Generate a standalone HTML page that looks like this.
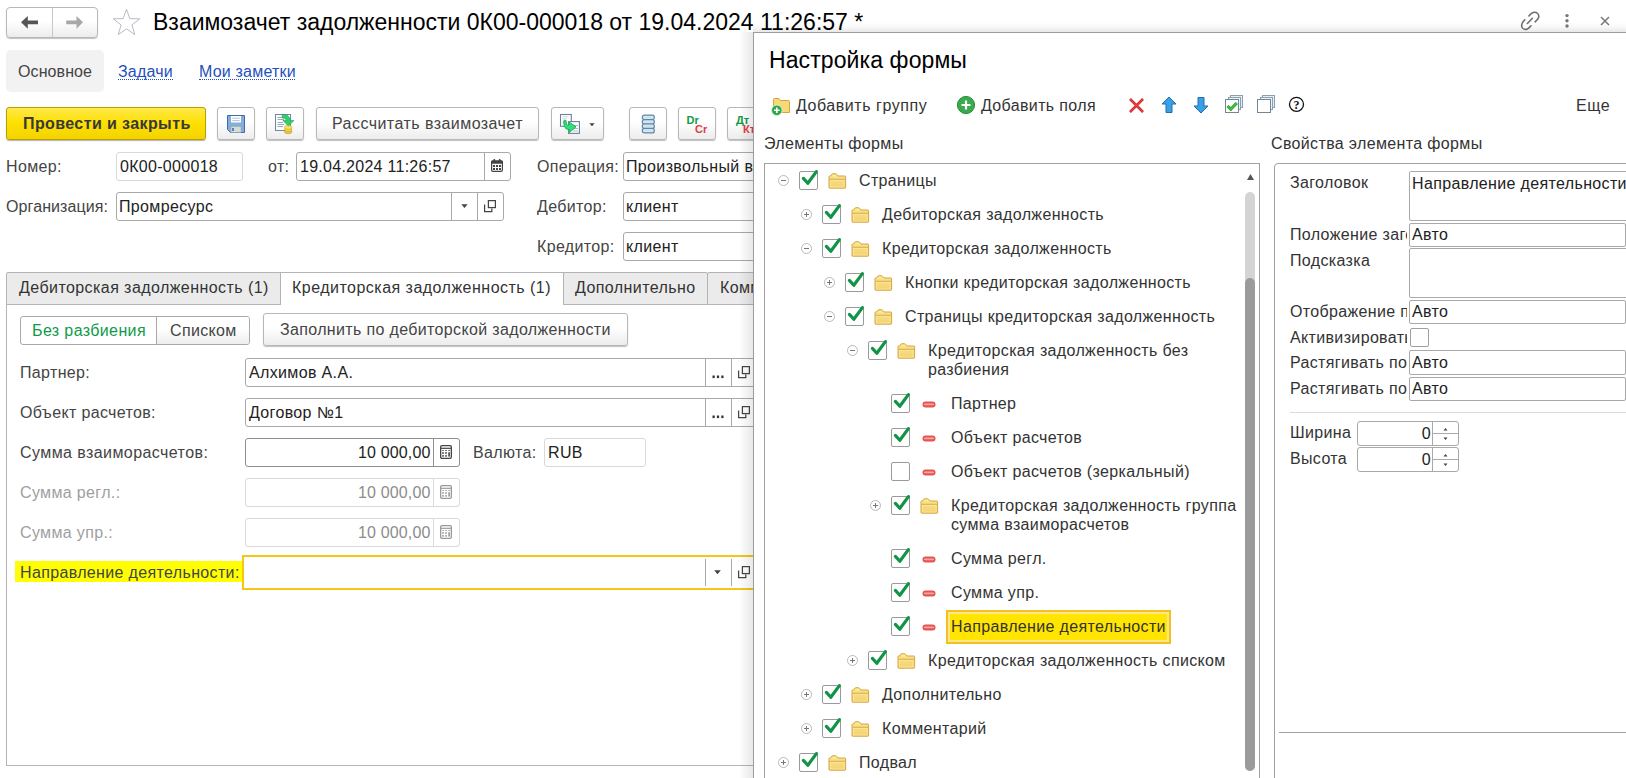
<!DOCTYPE html>
<html><head><meta charset="utf-8">
<style>
*{box-sizing:border-box;margin:0;padding:0}
html,body{width:1626px;height:778px;overflow:hidden;background:#fff;font-family:"Liberation Sans",sans-serif;color:#333}
.a{position:absolute}
.t{position:absolute;font-size:16px;line-height:22px;white-space:nowrap;color:#333;letter-spacing:0.35px}
.btn{position:absolute;border:1px solid #b8b8b8;border-radius:3px;background:linear-gradient(#fff,#fff 45%,#ececec);box-shadow:0 1px 1px rgba(0,0,0,.25)}
.fld{position:absolute;border:1px solid #a9a9a9;border-radius:3px;background:#fff}
.fld.dis{border-color:#d9d9d9}
.vd{position:absolute;top:0;bottom:0;width:1px;background:#a9a9a9}
.tab{position:absolute;border:1px solid #b4b4b4;background:#ebebeb;border-radius:2px 2px 0 0}
</style></head><body>

<!-- ===== header ===== -->
<div class="btn" style="left:6px;top:7px;width:92px;height:31px;border-radius:4px"></div>
<div class="a" style="left:52px;top:8px;width:1px;height:29px;background:#c8c8c8"></div>
<svg class="a" style="left:20px;top:15px" width="20" height="16" viewBox="0 0 20 16"><path d="M1 7.3 L7.8 1 L7.8 5.5 L18 5.5 L18 9.2 L7.8 9.2 L7.8 13.8 Z" fill="#555"/></svg>
<svg class="a" style="left:65px;top:15px" width="20" height="16" viewBox="0 0 20 16"><path d="M18 7.3 L11.5 1 L11.5 5.5 L1.2 5.5 L1.2 9.2 L11.5 9.2 L11.5 13.8 Z" fill="#a8a8a8"/></svg>
<svg class="a" style="left:111px;top:7px" width="31" height="30" viewBox="0 0 31 30"><path d="M15.5 2.2 L18.8 11.6 L28.8 11.8 L20.9 17.9 L23.8 27.6 L15.5 21.9 L7.2 27.6 L10.1 17.9 L2.2 11.8 L12.2 11.6 Z" fill="none" stroke="#b7bcc3" stroke-width="1"/></svg>
<div class="t" style="left:153px;top:8px;font-size:23px;line-height:28px;color:#000;letter-spacing:0">Взаимозачет задолженности 0К00-000018 от 19.04.2024 11:26:57 *</div>

<!-- window icons -->
<svg class="a" style="left:1519px;top:10px" width="22" height="22" viewBox="0 0 22 22"><g fill="none" stroke="#6e6e6e" stroke-width="1.6" stroke-linecap="round"><path d="M9.9 6 C11.5 4 13 2.3 15.5 2.3 C18 2.3 19.8 4.2 19.8 6.6 C19.8 8.5 18 10.2 16.1 11.8"/><path d="M5.7 9.9 C4 11.5 2.6 13 2.6 15.2 C2.6 17.6 4.4 19.5 6.8 19.5 C9 19.5 10.5 17.5 12 15.8"/><path d="M8.4 13.5 L13.4 8.3"/></g></svg>
<svg class="a" style="left:1562px;top:12px" width="10" height="18" viewBox="0 0 10 18"><g fill="#777"><circle cx="5" cy="3.6" r="1.7"/><circle cx="5" cy="8.8" r="1.7"/><circle cx="5" cy="14" r="1.7"/></g></svg>
<svg class="a" style="left:1598px;top:14px" width="14" height="14" viewBox="0 0 14 14"><g stroke="#777" stroke-width="1.5"><path d="M3 3 L11 11 M11 3 L3 11"/></g></svg>

<!-- nav tabs -->
<div class="a" style="left:6px;top:50px;width:98px;height:42px;background:#f2f2f2;border-radius:5px"></div>
<div class="t" style="left:18px;top:61px;letter-spacing:0.1px;color:#444">Основное</div>
<div class="t" style="left:118px;top:61px;color:#1f50c0;letter-spacing:0.2px">Задачи</div><div class="a" style="left:118px;top:79px;width:55px;height:1px;border-top:1px dotted #1f50c0"></div>
<div class="t" style="left:199px;top:61px;color:#1f50c0;letter-spacing:0.2px">Мои заметки</div><div class="a" style="left:199px;top:79px;width:96px;height:1px;border-top:1px dotted #1f50c0"></div>

<!-- toolbar -->
<div class="a" style="left:6px;top:107px;width:200px;height:33px;border:1px solid #b9a000;border-radius:3px;background:linear-gradient(#ffe94a,#fde000 50%,#f3d300);box-shadow:0 1px 1px rgba(0,0,0,.3)"></div>
<div class="t" style="left:23px;top:113px;font-weight:bold;color:#383838;letter-spacing:0.4px">Провести и закрыть</div>
<div class="btn" style="left:217px;top:107px;width:38px;height:33px"></div>
<div class="btn" style="left:266px;top:107px;width:38px;height:33px"></div>
<div class="btn" style="left:316px;top:107px;width:223px;height:33px"></div>
<div class="t" style="left:332px;top:113px;letter-spacing:0.45px;color:#444">Рассчитать взаимозачет</div>
<div class="btn" style="left:551px;top:107px;width:53px;height:33px"></div>
<div class="btn" style="left:629px;top:107px;width:38px;height:33px"></div>
<div class="btn" style="left:678px;top:107px;width:38px;height:33px"></div>
<div class="btn" style="left:727px;top:107px;width:38px;height:33px"></div>

<!-- fields -->
<div class="t" style="left:6px;top:156px;color:#444">Номер:</div>
<div class="fld dis" style="left:116px;top:152px;width:127px;height:29px"></div>
<div class="t" style="left:120px;top:156px;letter-spacing:0.3px;color:#222">0К00-000018</div>
<div class="t" style="left:268px;top:156px;color:#444">от:</div>
<div class="fld" style="left:296px;top:152px;width:215px;height:29px"><div class="vd" style="left:187px"></div></div>
<div class="t" style="left:300px;top:156px;letter-spacing:0.27px;color:#222">19.04.2024 11:26:57</div>
<div class="t" style="left:537px;top:156px;color:#444">Операция:</div>
<div class="fld" style="left:623px;top:152px;width:200px;height:29px"></div>
<div class="t" style="left:626px;top:156px;color:#222">Произвольный в</div>

<div class="t" style="left:6px;top:196px;letter-spacing:0.1px;color:#444">Организация:</div>
<div class="fld" style="left:116px;top:192px;width:388px;height:29px"><div class="vd" style="left:334px"></div><div class="vd" style="left:360px"></div></div>
<div class="t" style="left:119px;top:196px;color:#222">Промресурс</div>
<div class="t" style="left:537px;top:196px;color:#444">Дебитор:</div>
<div class="fld" style="left:623px;top:192px;width:200px;height:29px"></div>
<div class="t" style="left:626px;top:196px;color:#222">клиент</div>

<div class="t" style="left:537px;top:236px;color:#444">Кредитор:</div>
<div class="fld" style="left:623px;top:232px;width:200px;height:29px"></div>
<div class="t" style="left:626px;top:236px;color:#222">клиент</div>

<!-- tabs -->
<div class="a" style="left:6px;top:304px;width:1px;height:462px;background:#b4b4b4"></div>
<div class="a" style="left:6px;top:765px;width:760px;height:1px;background:#b4b4b4"></div>
<div class="a" style="left:6px;top:304px;width:760px;height:1px;background:#b4b4b4"></div>
<div class="tab" style="left:6px;top:272px;width:275px;height:33px"></div>
<div class="a" style="left:280px;top:272px;width:284px;height:33px;border:1px solid #b4b4b4;border-bottom:none;background:#fff"></div>
<div class="tab" style="left:563px;top:272px;width:145px;height:33px"></div>
<div class="tab" style="left:707px;top:272px;width:80px;height:33px"></div>
<div class="t" style="left:19px;top:277px;letter-spacing:0.43px">Дебиторская задолженность (1)</div>
<div class="t" style="left:292px;top:277px;letter-spacing:0.48px">Кредиторская задолженность (1)</div>
<div class="t" style="left:575px;top:277px;letter-spacing:0.42px">Дополнительно</div>
<div class="t" style="left:720px;top:277px">Комментарий</div>

<div class="a" style="left:20px;top:316px;width:230px;height:29px;border:1px solid #a9a9a9;border-radius:3px;background:#fff;overflow:hidden"><div class="a" style="left:135px;top:0;width:95px;height:29px;border-left:1px solid #a9a9a9;background:linear-gradient(#fff,#fff 40%,#ebebeb)"></div></div>
<div class="t" style="left:32px;top:320px;color:#0e9a4a;letter-spacing:0.38px">Без разбиения</div>
<div class="t" style="left:170px;top:320px;color:#444">Списком</div>
<div class="btn" style="left:263px;top:313px;width:365px;height:33px"></div>
<div class="t" style="left:280px;top:319px;color:#444">Заполнить по дебиторской задолженности</div>

<div class="t" style="left:20px;top:362px;color:#444">Партнер:</div>
<div class="fld" style="left:245px;top:358px;width:520px;height:29px"><div class="vd" style="left:459px"></div><div class="vd" style="left:485px"></div></div>
<div class="t" style="left:249px;top:362px;color:#222">Алхимов А.А.</div>
<div class="t" style="left:20px;top:402px;color:#444">Объект расчетов:</div>
<div class="fld" style="left:245px;top:398px;width:520px;height:29px"><div class="vd" style="left:459px"></div><div class="vd" style="left:485px"></div></div>
<div class="t" style="left:249px;top:402px;color:#222">Договор №1</div>

<div class="t" style="left:20px;top:442px;letter-spacing:0.42px;color:#444">Сумма взаиморасчетов:</div>
<div class="fld" style="left:245px;top:438px;width:215px;height:29px;border-color:#8f8f8f"><div class="vd" style="left:187px;background:#8f8f8f"></div></div>
<div class="t" style="left:330px;top:442px;width:100.5px;text-align:right;color:#222;letter-spacing:0.15px">10 000,00</div>
<div class="t" style="left:473px;top:442px;color:#444">Валюта:</div>
<div class="fld dis" style="left:544px;top:438px;width:102px;height:29px"></div>
<div class="t" style="left:548px;top:442px;color:#222">RUB</div>

<div class="t" style="left:20px;top:482px;color:#a0a0a0">Сумма регл.:</div>
<div class="fld dis" style="left:245px;top:478px;width:215px;height:29px"><div class="vd" style="left:187px;background:#d9d9d9"></div></div>
<div class="t" style="left:330px;top:482px;width:100.5px;text-align:right;color:#8c8c8c;letter-spacing:0.15px">10 000,00</div>
<div class="t" style="left:20px;top:522px;color:#a0a0a0">Сумма упр.:</div>
<div class="fld dis" style="left:245px;top:518px;width:215px;height:29px"><div class="vd" style="left:187px;background:#d9d9d9"></div></div>
<div class="t" style="left:330px;top:522px;width:100.5px;text-align:right;color:#8c8c8c;letter-spacing:0.15px">10 000,00</div>

<div class="a" style="left:15px;top:561px;width:228px;height:21px;background:#ffff00"></div>
<div class="t" style="left:20px;top:562px;color:#444">Направление деятельности:</div>
<div class="a" style="left:242px;top:555px;width:525px;height:35px;border:2px solid #f5c518;background:#fff"><div class="vd" style="left:461px;top:2px;bottom:2px"></div><div class="vd" style="left:487px;top:2px;bottom:2px"></div></div>

<svg width="0" height="0" style="position:absolute"><defs>
<symbol id="cal" viewBox="0 0 12 13"><rect x="0.6" y="2.2" width="10.8" height="10.2" rx="1.3" fill="#fff" stroke="#444" stroke-width="1.2"/><rect x="0" y="1.6" width="12" height="3.2" rx="1" fill="#444"/><rect x="2.3" y="0" width="2" height="3" rx="1" fill="#444"/><rect x="7.7" y="0" width="2" height="3" rx="1" fill="#444"/><g fill="#444"><rect x="2" y="6" width="2" height="2"/><rect x="5" y="6" width="2" height="2"/><rect x="8" y="6" width="2" height="2"/><rect x="2" y="9" width="2" height="2"/><rect x="5" y="9" width="2" height="2"/><rect x="8" y="9" width="2" height="2"/></g></symbol>
<symbol id="dd" viewBox="0 0 8 5"><path d="M0.2 0.3 L7.8 0.3 L4 4.7 Z" fill="#444"/></symbol>
<symbol id="op" viewBox="0 0 13 13"><path d="M1.6 4.6 V11.6 H8.8 V8.4" fill="none" stroke="#444" stroke-width="1.25"/><rect x="5.4" y="0.6" width="7" height="7" fill="#fff" stroke="#444" stroke-width="1.25"/></symbol>
<symbol id="dots" viewBox="0 0 12 4"><g fill="#333"><rect x="0.5" y="0.5" width="2.2" height="2.6"/><rect x="4.9" y="0.5" width="2.2" height="2.6"/><rect x="9.3" y="0.5" width="2.2" height="2.6"/></g></symbol>
<symbol id="calc" viewBox="0 0 12 14"><rect x="0.65" y="0.65" width="10.7" height="12.7" rx="1.3" fill="#fff" stroke="currentColor" stroke-width="1.3"/><path d="M0.7 3.3 H11.3" stroke="currentColor" stroke-width="1.2"/><g fill="currentColor"><rect x="2.2" y="5.1" width="1.6" height="0.9"/><rect x="5.2" y="5.1" width="1.6" height="0.9"/><rect x="8.3" y="5.1" width="1.6" height="0.9"/><rect x="2.2" y="7.2" width="1.6" height="1.6"/><rect x="5.2" y="7.2" width="1.6" height="1.6"/><rect x="8.3" y="7.2" width="1.6" height="4.4"/><rect x="2.2" y="10.1" width="1.6" height="1.6"/><rect x="5.2" y="10.1" width="1.6" height="1.6"/></g></symbol>
</defs></svg>
<!-- toolbar icons -->
<svg class="a" style="left:227px;top:115px" width="18" height="18" viewBox="0 0 18 18"><path d="M0.5 0.5 H17.5 V17.5 H3.5 L0.5 14.5 Z" fill="#86acd9" stroke="#3d6ca6" stroke-width="1"/><rect x="4" y="1" width="10" height="6.5" fill="#fff"/><path d="M5.3 3.2 H12.8 M5.3 5.6 H12.8" stroke="#86a9d2" stroke-width="0.7"/><rect x="4" y="11.5" width="10" height="6" fill="#d6dcd8" stroke="#8aa" stroke-width=".5"/><rect x="5.2" y="13" width="1.6" height="3" fill="#3d6ca6"/></svg>
<svg class="a" style="left:274px;top:113px" width="20" height="22" viewBox="0 0 20 22"><rect x="1.5" y="1.5" width="15" height="16" fill="#fff" stroke="#7087a3" stroke-width="1"/><path d="M3.5 4.5 H9 M3.5 6.5 H10 M3.5 9.5 H9 M3.5 11.5 H10 M3.5 13.5 H9" stroke="#8aa0b8" stroke-width=".9"/><ellipse cx="14.2" cy="18.8" rx="3.8" ry="2" fill="#e9c83a" stroke="#c9a020" stroke-width=".6"/><ellipse cx="14.2" cy="16.6" rx="3.8" ry="2" fill="#f3d850" stroke="#c9a020" stroke-width=".6"/><ellipse cx="14.2" cy="14.4" rx="3.8" ry="2" fill="#f7e16a" stroke="#c9a020" stroke-width=".6"/><path d="M8.2 1.4 Q15.6 1 16.4 7.5 L20 7.5 L14.4 12.8 L8.8 7.5 L12.4 7.5 Q12 4.8 8.2 5 Z" fill="#2fd06a" stroke="#1ea04e" stroke-width=".6"/></svg>
<svg class="a" style="left:559px;top:113px" width="23" height="22" viewBox="0 0 23 22"><rect x="1.5" y="1.5" width="10.8" height="11.8" fill="#fff" stroke="#6c8296" stroke-width="1.1"/><path d="M3.5 3.8 H9.5 M3.5 5.8 H8" stroke="#a9b8c6" stroke-width=".6"/><rect x="9.6" y="8.6" width="10.8" height="11.8" fill="#fff" stroke="#6c8296" stroke-width="1.1"/><path d="M14 12.5 H19 M14 15.5 H19 M14 18 H19" stroke="#9fb0c0" stroke-width=".8"/><path d="M4.5 9 Q5 6 7 7.5 L7.5 11.5 Q9 13 10.5 11.5 L10 9 L17 13.8 L10.5 19.5 L10.8 16.5 Q6.5 17 5.5 13.5 Z" fill="#2ee27a" stroke="#18a850" stroke-width=".9" stroke-linejoin="round"/></svg>
<svg class="a" style="left:589px;top:123px" width="6" height="3.5"><use href="#dd"/></svg>
<svg class="a" style="left:641px;top:114px" width="15" height="20" viewBox="0 0 15 20"><g fill="#d3e4f1" stroke="#5f86a6" stroke-width="1.2"><rect x="1.3" y="1.2" width="12" height="4.5" rx="2"/><rect x="1.3" y="5.6" width="12" height="4.5" rx="2"/><rect x="1.3" y="10" width="12" height="4.5" rx="2"/><rect x="1.3" y="14.4" width="12" height="4.5" rx="2"/></g></svg>
<div class="a" style="left:686.5px;top:114px;font:bold 11px/12px 'Liberation Sans',sans-serif;color:#119a46">Dr</div>
<div class="a" style="left:695px;top:122.5px;font:bold 11px/12px 'Liberation Sans',sans-serif;color:#e23c40">Cr</div>
<div class="a" style="left:736px;top:114px;font:bold 11px/12px 'Liberation Sans',sans-serif;color:#119a46">Дт</div>
<div class="a" style="left:743px;top:122.5px;font:bold 11px/12px 'Liberation Sans',sans-serif;color:#e23c40">Кт</div>
<!-- field icons -->
<svg class="a" style="left:491px;top:159px" width="12" height="13"><use href="#cal"/></svg>
<svg class="a" style="left:460.5px;top:204px" width="7" height="4.2"><use href="#dd"/></svg>
<svg class="a" style="left:483px;top:200px" width="13" height="13"><use href="#op"/></svg>
<svg class="a" style="left:712px;top:375px" width="12" height="4"><use href="#dots"/></svg>
<svg class="a" style="left:737px;top:366px" width="13" height="13"><use href="#op"/></svg>
<svg class="a" style="left:712px;top:415px" width="12" height="4"><use href="#dots"/></svg>
<svg class="a" style="left:737px;top:406px" width="13" height="13"><use href="#op"/></svg>
<svg class="a" style="left:440px;top:445px;color:#444" width="12" height="14"><use href="#calc"/></svg>
<svg class="a" style="left:440px;top:485px;color:#9a9a9a" width="12" height="14"><use href="#calc"/></svg>
<svg class="a" style="left:440px;top:525px;color:#9a9a9a" width="12" height="14"><use href="#calc"/></svg>
<svg class="a" style="left:714px;top:570px" width="7" height="4.5"><use href="#dd"/></svg>
<svg class="a" style="left:737px;top:566px" width="13" height="13"><use href="#op"/></svg>

<!-- ===== overlay ===== -->
<div class="a" style="left:739px;top:32px;width:14px;height:746px;background:linear-gradient(90deg,rgba(0,0,0,0),rgba(0,0,0,.09))"></div>
<div class="a" style="left:753px;top:22px;width:873px;height:10px;background:linear-gradient(rgba(0,0,0,0),rgba(0,0,0,.02) 40%,rgba(0,0,0,.09))"></div>
<div class="a" style="left:753px;top:32px;width:873px;height:746px;background:#fff;border-left:1px solid #9c9c9c;border-top:1px solid #9c9c9c"></div>
<svg width="0" height="0" style="position:absolute">
<defs>
<symbol id="ck" viewBox="0 0 18 18"><path d="M2.4 9.4 L6.8 14.3 L15.4 2.6" fill="none" stroke="#129447" stroke-width="3.2" stroke-linecap="round" stroke-linejoin="round"/></symbol>
<symbol id="fo" viewBox="0 0 19 16"><linearGradient id="fg" x1="0" y1="0" x2="0" y2="1"><stop offset="0" stop-color="#f9e48e"/><stop offset="1" stop-color="#f3d272"/></linearGradient><path d="M1 3.5 Q1 3 1.5 3 L2.5 3 L4 1 Q4.5 0.7 5 0.7 L7.5 0.7 Q8 0.7 8.5 1.2 L10 3 L17 3 Q17.6 3 17.6 3.6 L17.6 14.6 Q17.6 15.2 17 15.2 L1.6 15.2 Q1 15.2 1 14.6 Z" fill="url(#fg)" stroke="#d6a446" stroke-width="1"/><path d="M4.5 2.2 L8 2.2 L9 3.5 L4 3.5 Z" fill="#fdf07e"/><path d="M1.5 6.3 L17.1 6.3" stroke="#dcae52" stroke-width="1"/><rect x="2.5" y="7.4" width="13.6" height="6.6" fill="none" stroke="#fbe79a" stroke-width=".8"/></symbol>
<symbol id="ex" viewBox="0 0 11 11"><circle cx="5.5" cy="5.5" r="5" fill="#fff" stroke="#b9b9b9"/><path d="M3 5.5 H8 M5.5 3 V8" stroke="#777" stroke-width="1"/></symbol>
<symbol id="co" viewBox="0 0 11 11"><circle cx="5.5" cy="5.5" r="5" fill="#fff" stroke="#b9b9b9"/><path d="M3 5.5 H8" stroke="#777" stroke-width="1"/></symbol>
<symbol id="mi" viewBox="0 0 14 7"><rect x="0.5" y="0.5" width="13" height="6" rx="3" fill="#e5554f"/><rect x="2" y="2.6" width="10" height="1.6" rx=".8" fill="#f4a7a3"/></symbol>
</defs></svg>
<style>
.cb{position:absolute;width:19px;height:19px;border:1px solid #9a9a9a;border-radius:2px;background:#fff}
.sel{background:#ffe500;border:2px solid #f2c21c;box-shadow:inset 0 0 0 2px #fde68c}
</style>
<div class="t" style="left:769px;top:46px;font-size:23px;line-height:28px;color:#000;letter-spacing:0.1px">Настройка формы</div>

<!-- overlay toolbar -->
<svg class="a" style="left:771px;top:96px" width="20" height="20" viewBox="0 0 20 20"><path d="M2.5 3.5 Q2.5 2.5 3.5 2.5 L8 2.5 L9.5 4.5 L17.5 4.5 Q18.5 4.5 18.5 5.5 L18.5 16.5 L2.5 16.5 Z" fill="#f6d978" stroke="#d6a443"/><circle cx="5.8" cy="14.3" r="5.3" fill="#2fa84a" stroke="#e8f5e8" stroke-width="0.8"/><path d="M3 14.3 H8.6 M5.8 11.5 V17.1" stroke="#fff" stroke-width="1.6"/></svg>
<div class="t" style="left:796px;top:95px;letter-spacing:0.55px">Добавить группу</div>
<svg class="a" style="left:956px;top:95px" width="20" height="20" viewBox="0 0 20 20"><circle cx="10" cy="10" r="8.6" fill="#3aaa4d" stroke="#2a8e3c" stroke-width="1"/><path d="M5.5 10 H14.5 M10 5.5 V14.5" stroke="#fff" stroke-width="2.2"/></svg>
<div class="t" style="left:981px;top:95px">Добавить поля</div>
<svg class="a" style="left:1127px;top:96px" width="19" height="19" viewBox="0 0 19 19"><path d="M3 3 L16 16 M16 3 L3 16" stroke="#c42020" stroke-width="2.5"/><path d="M3 3 L16 16 M16 3 L3 16" stroke="#ef4040" stroke-width="1.2"/></svg>
<svg class="a" style="left:1161px;top:96px" width="16" height="18" viewBox="0 0 16 18"><path d="M8 1 L15 8 L11 8 L11 16.5 L5 16.5 L5 8 L1 8 Z" fill="#3aa0e6" stroke="#1f6fb0" stroke-width="1" stroke-linejoin="round"/></svg>
<svg class="a" style="left:1193px;top:96px" width="16" height="18" viewBox="0 0 16 18"><path d="M8 17 L15 10 L11 10 L11 1.5 L5 1.5 L5 10 L1 10 Z" fill="#3aa0e6" stroke="#1f6fb0" stroke-width="1" stroke-linejoin="round"/></svg>
<svg class="a" style="left:1224px;top:94px" width="20" height="20" viewBox="0 0 20 20"><rect x="6.5" y="1.5" width="12" height="12" fill="#e6eef3" stroke="#8aa0b0"/><rect x="4.5" y="3.5" width="12" height="12" fill="#eef3f6" stroke="#8aa0b0"/><rect x="1.5" y="5.5" width="13" height="13" fill="#fff" stroke="#6f8899"/><path d="M3.6 12 L6.8 15.2 L12.8 9" fill="none" stroke="#1e8e24" stroke-width="3"/><path d="M3.6 12 L6.8 15.2 L12.8 9" fill="none" stroke="#3fd03a" stroke-width="1.5"/></svg>
<svg class="a" style="left:1256px;top:94px" width="20" height="20" viewBox="0 0 20 20"><rect x="6.5" y="1.5" width="12" height="12" fill="#e6eef3" stroke="#8aa0b0"/><rect x="4.5" y="3.5" width="12" height="12" fill="#eef3f6" stroke="#8aa0b0"/><rect x="1.5" y="5.5" width="13" height="13" fill="#fff" stroke="#6f8899"/></svg>
<svg class="a" style="left:1288px;top:96px" width="17" height="17" viewBox="0 0 17 17"><circle cx="8.5" cy="8.3" r="7" fill="#fff" stroke="#111" stroke-width="1.3"/><text x="8.5" y="12.6" text-anchor="middle" font-family="Liberation Serif" font-weight="bold" font-size="12" fill="#111">?</text></svg>
<div class="t" style="left:1576px;top:95px;letter-spacing:0.6px">Еще</div>

<div class="t" style="left:764px;top:133px">Элементы формы</div>
<div class="t" style="left:1271px;top:133px">Свойства элемента формы</div>

<!-- tree box -->
<div class="a" style="left:764px;top:163px;width:496px;height:630px;border:1px solid #a0a0a0"></div>
<svg class="a" style="left:1246px;top:173px" width="9" height="8" viewBox="0 0 9 8"><path d="M4.5 1 L8 7 L1 7 Z" fill="#555"/></svg>
<div class="a" style="left:1245px;top:192px;width:10px;height:579px;border-radius:5px;background:#d4d4d4"></div>
<div class="a" style="left:1245px;top:278px;width:10px;height:493px;border-radius:5px;background:#9b9b9b"></div>

<!-- properties box -->
<div class="a" style="left:1274px;top:163px;width:400px;height:700px;border:1px solid #a0a0a0;border-radius:4px"></div>
<div class="a" style="left:1279px;top:732px;width:347px;height:1px;background:#a0a0a0"></div>
<svg class="a" style="left:778px;top:175px" width="11" height="11"><use href="#co"/></svg>
<div class="cb" style="left:799px;top:171px"></div>
<svg class="a" style="left:801px;top:169px" width="18" height="18"><use href="#ck"/></svg>
<svg class="a" style="left:828px;top:173px" width="19" height="16"><use href="#fo"/></svg>
<div class="t" style="left:859px;top:170px">Страницы</div>
<svg class="a" style="left:801px;top:209px" width="11" height="11"><use href="#ex"/></svg>
<div class="cb" style="left:822px;top:205px"></div>
<svg class="a" style="left:824px;top:203px" width="18" height="18"><use href="#ck"/></svg>
<svg class="a" style="left:851px;top:207px" width="19" height="16"><use href="#fo"/></svg>
<div class="t" style="left:882px;top:204px">Дебиторская задолженность</div>
<svg class="a" style="left:801px;top:243px" width="11" height="11"><use href="#co"/></svg>
<div class="cb" style="left:822px;top:239px"></div>
<svg class="a" style="left:824px;top:237px" width="18" height="18"><use href="#ck"/></svg>
<svg class="a" style="left:851px;top:241px" width="19" height="16"><use href="#fo"/></svg>
<div class="t" style="left:882px;top:238px">Кредиторская задолженность</div>
<svg class="a" style="left:824px;top:277px" width="11" height="11"><use href="#ex"/></svg>
<div class="cb" style="left:845px;top:273px"></div>
<svg class="a" style="left:847px;top:271px" width="18" height="18"><use href="#ck"/></svg>
<svg class="a" style="left:874px;top:275px" width="19" height="16"><use href="#fo"/></svg>
<div class="t" style="left:905px;top:272px">Кнопки кредиторская задолженность</div>
<svg class="a" style="left:824px;top:311px" width="11" height="11"><use href="#co"/></svg>
<div class="cb" style="left:845px;top:307px"></div>
<svg class="a" style="left:847px;top:305px" width="18" height="18"><use href="#ck"/></svg>
<svg class="a" style="left:874px;top:309px" width="19" height="16"><use href="#fo"/></svg>
<div class="t" style="left:905px;top:306px">Страницы кредиторская задолженность</div>
<svg class="a" style="left:847px;top:345px" width="11" height="11"><use href="#co"/></svg>
<div class="cb" style="left:868px;top:341px"></div>
<svg class="a" style="left:870px;top:339px" width="18" height="18"><use href="#ck"/></svg>
<svg class="a" style="left:897px;top:343px" width="19" height="16"><use href="#fo"/></svg>
<div class="t" style="left:928px;top:340px">Кредиторская задолженность без</div>
<div class="t" style="left:928px;top:359px">разбиения</div>
<div class="cb" style="left:891px;top:394px"></div>
<svg class="a" style="left:893px;top:392px" width="18" height="18"><use href="#ck"/></svg>
<svg class="a" style="left:922px;top:401px" width="14" height="7"><use href="#mi"/></svg>
<div class="t" style="left:951px;top:393px">Партнер</div>
<div class="cb" style="left:891px;top:428px"></div>
<svg class="a" style="left:893px;top:426px" width="18" height="18"><use href="#ck"/></svg>
<svg class="a" style="left:922px;top:435px" width="14" height="7"><use href="#mi"/></svg>
<div class="t" style="left:951px;top:427px">Объект расчетов</div>
<div class="cb" style="left:891px;top:462px"></div>
<svg class="a" style="left:922px;top:469px" width="14" height="7"><use href="#mi"/></svg>
<div class="t" style="left:951px;top:461px">Объект расчетов (зеркальный)</div>
<svg class="a" style="left:870px;top:500px" width="11" height="11"><use href="#ex"/></svg>
<div class="cb" style="left:891px;top:496px"></div>
<svg class="a" style="left:893px;top:494px" width="18" height="18"><use href="#ck"/></svg>
<svg class="a" style="left:920px;top:498px" width="19" height="16"><use href="#fo"/></svg>
<div class="t" style="left:951px;top:495px">Кредиторская задолженность группа</div>
<div class="t" style="left:951px;top:514px">сумма взаиморасчетов</div>
<div class="cb" style="left:891px;top:549px"></div>
<svg class="a" style="left:893px;top:547px" width="18" height="18"><use href="#ck"/></svg>
<svg class="a" style="left:922px;top:556px" width="14" height="7"><use href="#mi"/></svg>
<div class="t" style="left:951px;top:548px">Сумма регл.</div>
<div class="cb" style="left:891px;top:583px"></div>
<svg class="a" style="left:893px;top:581px" width="18" height="18"><use href="#ck"/></svg>
<svg class="a" style="left:922px;top:590px" width="14" height="7"><use href="#mi"/></svg>
<div class="t" style="left:951px;top:582px">Сумма упр.</div>
<div class="cb" style="left:891px;top:617px"></div>
<svg class="a" style="left:893px;top:615px" width="18" height="18"><use href="#ck"/></svg>
<svg class="a" style="left:922px;top:624px" width="14" height="7"><use href="#mi"/></svg>
<div class="a sel" style="left:946px;top:610px;width:225px;height:34px"></div>
<div class="t" style="left:951px;top:616px">Направление деятельности</div>
<svg class="a" style="left:847px;top:655px" width="11" height="11"><use href="#ex"/></svg>
<div class="cb" style="left:868px;top:651px"></div>
<svg class="a" style="left:870px;top:649px" width="18" height="18"><use href="#ck"/></svg>
<svg class="a" style="left:897px;top:653px" width="19" height="16"><use href="#fo"/></svg>
<div class="t" style="left:928px;top:650px">Кредиторская задолженность списком</div>
<svg class="a" style="left:801px;top:689px" width="11" height="11"><use href="#ex"/></svg>
<div class="cb" style="left:822px;top:685px"></div>
<svg class="a" style="left:824px;top:683px" width="18" height="18"><use href="#ck"/></svg>
<svg class="a" style="left:851px;top:687px" width="19" height="16"><use href="#fo"/></svg>
<div class="t" style="left:882px;top:684px">Дополнительно</div>
<svg class="a" style="left:801px;top:723px" width="11" height="11"><use href="#ex"/></svg>
<div class="cb" style="left:822px;top:719px"></div>
<svg class="a" style="left:824px;top:717px" width="18" height="18"><use href="#ck"/></svg>
<svg class="a" style="left:851px;top:721px" width="19" height="16"><use href="#fo"/></svg>
<div class="t" style="left:882px;top:718px">Комментарий</div>
<svg class="a" style="left:778px;top:757px" width="11" height="11"><use href="#ex"/></svg>
<div class="cb" style="left:799px;top:753px"></div>
<svg class="a" style="left:801px;top:751px" width="18" height="18"><use href="#ck"/></svg>
<svg class="a" style="left:828px;top:755px" width="19" height="16"><use href="#fo"/></svg>
<div class="t" style="left:859px;top:752px">Подвал</div>

<style>.pl{position:absolute;left:1290px;width:117px;overflow:hidden;font-size:16px;line-height:22px;white-space:nowrap;color:#333;letter-spacing:0.35px}
.pf{position:absolute;left:1409px;border:1px solid #a9a9a9;border-radius:2px;background:#fff}</style>
<div class="pl" style="top:172px">Заголовок</div>
<div class="pf" style="top:171px;width:260px;height:50px"></div>
<div class="t" style="left:1412px;top:173px;color:#222">Направление деятельности</div>
<div class="pl" style="top:224px">Положение заголовка</div>
<div class="pf" style="top:223px;width:217px;height:24px"></div>
<div class="t" style="left:1412px;top:224px;color:#222">Авто</div>
<div class="pl" style="top:250px">Подсказка</div>
<div class="pf" style="top:248px;width:260px;height:50px"></div>
<div class="pl" style="top:301px">Отображение подсказки</div>
<div class="pf" style="top:300px;width:217px;height:24px"></div>
<div class="t" style="left:1412px;top:301px;color:#222">Авто</div>
<div class="pl" style="top:327px">Активизировать по умолчанию</div>
<div class="a" style="left:1410px;top:328px;width:19px;height:19px;border:1px solid #a0a0a0;border-radius:2px;background:#fff"></div>
<div class="pl" style="top:352px">Растягивать по горизонтали</div>
<div class="pf" style="top:350px;width:217px;height:25px"></div>
<div class="t" style="left:1412px;top:352px;color:#222">Авто</div>
<div class="pl" style="top:378px">Растягивать по вертикали</div>
<div class="pf" style="top:377px;width:217px;height:24px"></div>
<div class="t" style="left:1412px;top:378px;color:#222">Авто</div>
<div class="a" style="left:1290px;top:412px;width:336px;height:1px;background:#dcdcdc"></div>
<div class="t" style="left:1290px;top:422px">Ширина</div>
<div class="pf" style="left:1357px;top:421px;width:102px;height:25px;border-radius:3px"><div class="vd" style="left:74px"></div><div class="a" style="left:75px;top:11px;width:25px;height:1px;background:#a9a9a9"></div></div>
<div class="t" style="left:1381px;top:423px;width:50px;text-align:right;color:#222">0</div>
<div class="t" style="left:1290px;top:448px">Высота</div>
<div class="pf" style="left:1357px;top:447px;width:102px;height:25px;border-radius:3px"><div class="vd" style="left:74px"></div><div class="a" style="left:75px;top:11px;width:25px;height:1px;background:#a9a9a9"></div></div>
<div class="t" style="left:1381px;top:449px;width:50px;text-align:right;color:#222">0</div>
<svg class="a" style="left:1441px;top:424px" width="9" height="20" viewBox="0 0 9 20"><path d="M4.5 4 L6.5 6.5 L2.5 6.5 Z M4.5 16 L6.5 13.5 L2.5 13.5 Z" fill="#444"/></svg>
<svg class="a" style="left:1441px;top:450px" width="9" height="20" viewBox="0 0 9 20"><path d="M4.5 4 L6.5 6.5 L2.5 6.5 Z M4.5 16 L6.5 13.5 L2.5 13.5 Z" fill="#444"/></svg>

</body></html>
